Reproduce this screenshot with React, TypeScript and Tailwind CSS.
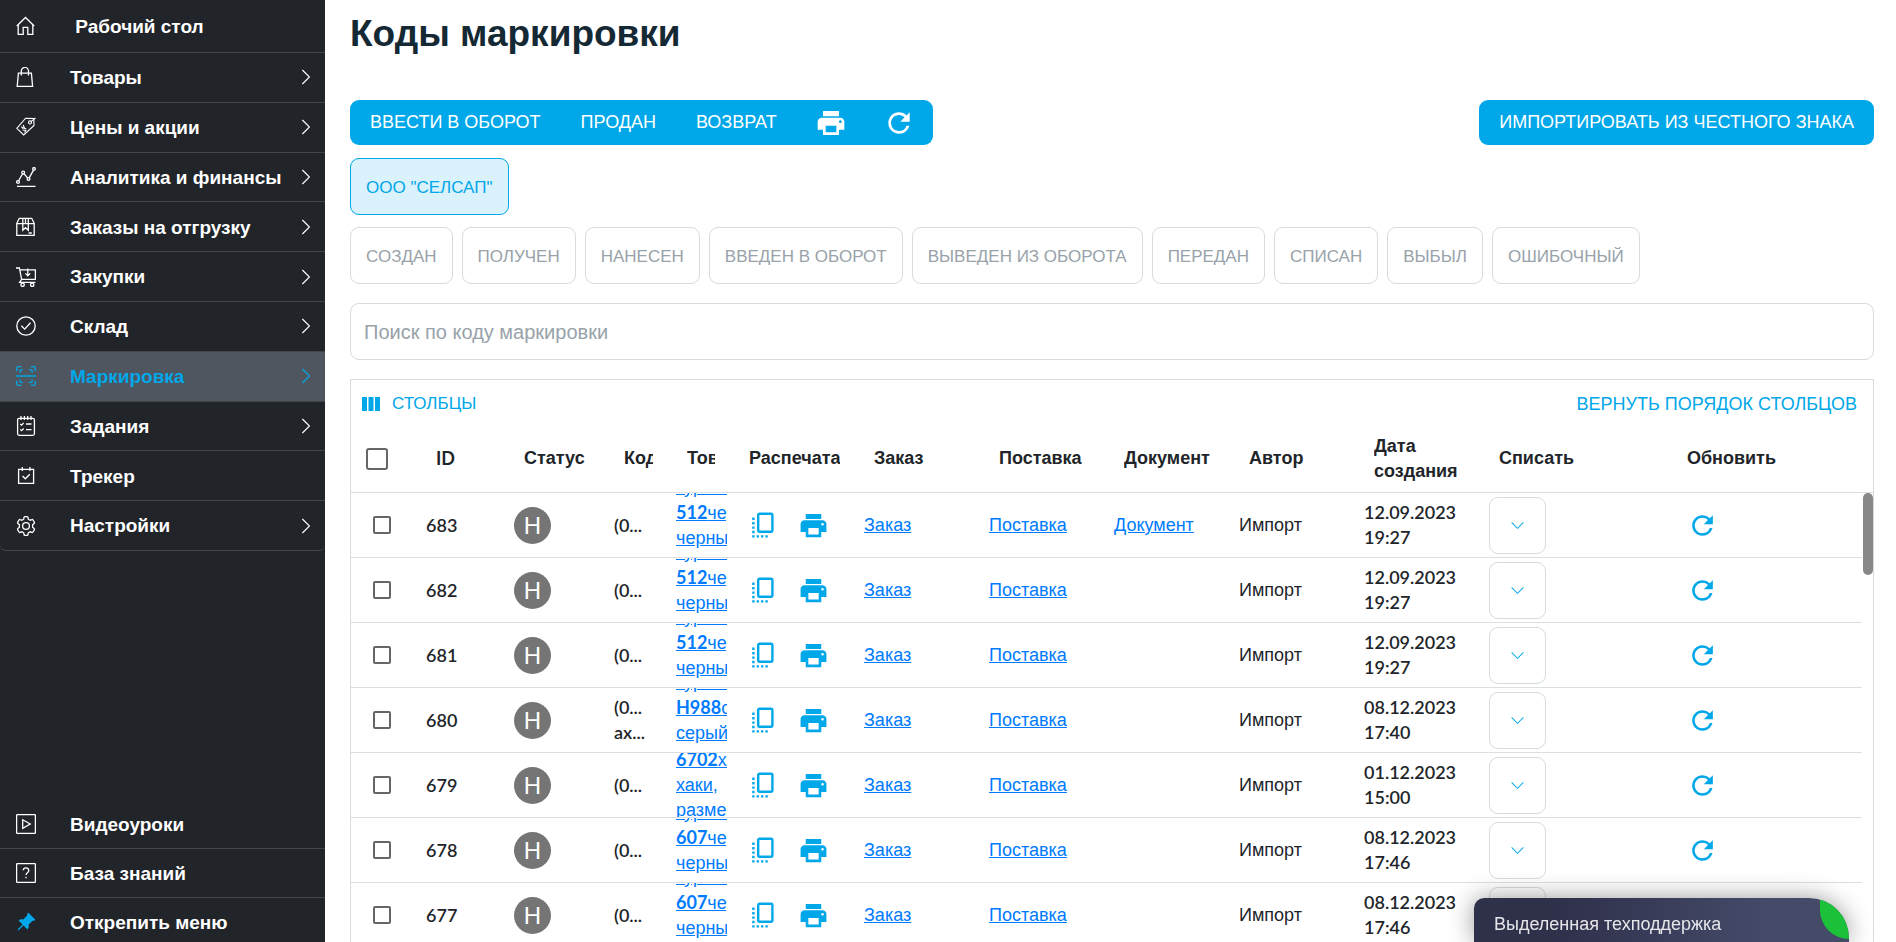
import React from "react";
import { BsChevronDown, BsChevronRight, BsPinAngleFill } from "react-icons/bs";
import { MdPrint, MdRefresh } from "react-icons/md";

const stroke = {
  width: 20,
  height: 20,
  viewBox: "0 0 20 20",
  fill: "none",
  stroke: "currentColor",
  strokeWidth: 1.3,
  "aria-hidden": true,
} as const;

const HomeIcon = () => (
  <svg {...stroke}>
    <path d="M.8 10 9.5 1.5 18.2 10M2.2 9v9.4h5V11.3h4.6v7.1h5V9" />
  </svg>
);
const BagIcon = () => (
  <svg {...stroke}>
    <path d="M2.4 6.2h13l1.2 13.1H1.2zM5.3 8.4V4a3.6 3.6 0 0 1 7.2 0v4.4" />
  </svg>
);
const TagIcon = () => (
  <svg {...stroke} strokeWidth={1.1}>
    <path d="M.8 11.3 9.6 1.2l8.2.3.2 7-10.300 9.400z" />
    <circle cx="14" cy="5.4" r="1.5" />
    <path d="M15 4.600 19.600.8M5.400 9.600l1.400 1.600 2-1M7.300 7.900l1 3.400 2.100.8M6.600 13l3.100.4-1 2" />
  </svg>
);
const ChartIcon = () => (
  <svg {...stroke}>
    <path d="M1 19.3h18.5M2.6 13.8 6.6 6.7M8 6.8l3.8 4.3M13.3 10.6l4.2-7.5" />
    <circle cx="2" cy="15" r="1.4" />
    <circle cx="7.2" cy="5.6" r="1.4" />
    <circle cx="12.5" cy="12" r="1.4" />
    <circle cx="18" cy="1.9" r="1.3" />
  </svg>
);
const BoxIcon = () => (
  <svg {...stroke}>
    <path d="M.8 18.4V6.3L3.3 1.3h12.4l2.5 5v12.1zM.8 6.600h17.400M6.800 1.300v11.900l2.700-2.500 2.800 2.500V1.300M9.500 1.300v5.300M12.600 16h3.200" />
  </svg>
);
const CartIcon = () => (
  <svg {...stroke}>
    <path d="M0 1h3.400l2.200 11.300h13.800V2.800H4M5.600 12.300 3.600 15.400h15.800M11.800 1.500v6.800M9.400 6.400l2.400 2.400 2.400-2.400" />
    <circle cx="6.600" cy="17.800" r="1.700" />
    <circle cx="16.200" cy="17.800" r="1.700" />
  </svg>
);
const CheckCircleIcon = () => (
  <svg {...stroke}>
    <circle cx="10" cy="10" r="9.2" />
    <path d="m5.3 9.8 3.4 3.3 5.8-6.3" />
  </svg>
);
const ScanIcon = () => (
  <svg {...stroke}>
    <path d="M.7 5.2V2.2A1.5 1.5 0 0 1 2.2.7h3M14.8.7h3a1.5 1.5 0 0 1 1.5 1.5v3M.7 14.8v3a1.5 1.5 0 0 0 1.5 1.5h3M14.8 19.3h3a1.5 1.5 0 0 0 1.5-1.5v-3M0 10h20M4 7V4.6a.8.8 0 0 1 .8-.8H7M13 3.8h2.3a.8.8 0 0 1 .8.8V7M4 13.3v2.2a.8.8 0 0 0 .8.8H7M13 16.3h2.3a.8.8 0 0 0 .8-.8v-2.2" />
  </svg>
);
const TasksIcon = () => (
  <svg {...stroke}>
    <rect x="1.6" y="2.3" width="16.8" height="17" rx="1.5" />
    <path d="M5 0v4M8.4 0v4M11.7 0v4M15 0v4M10 8h5.5M10 13.6h5.5M4.3 7.9l1.3 1.2 2.1-2.2M4.3 13.5l1.3 1.2 2.1-2.2" />
  </svg>
);
const TrackerIcon = () => (
  <svg {...stroke}>
    <path d="M2.6 3.3h15v14h-15zM6.3 1v4M13.9 1v4M6.5 10l2.8 2.8 4.5-4.6" />
  </svg>
);
const GearIcon = () => (
  <svg {...stroke}>
    <circle cx="10" cy="10" r="3.4" />
    <path d="M8 1.5a1 1 0 0 1 .9-.8h2.2a1 1 0 0 1 .9.8l.3 1.7 1.8 1 1.7-.6a1 1 0 0 1 1.2.4l1.3 2.1a1 1 0 0 1-.2 1.3L16.6 8.7v2.6l1.5 1.3a1 1 0 0 1 .2 1.3L17 16a1 1 0 0 1-1.2.4l-1.7-.6-1.8 1-.3 1.7a1 1 0 0 1-.9.8H8.9a1 1 0 0 1-.9-.8l-.3-1.7-1.8-1-1.7.6A1 1 0 0 1 3 16l-1.3-2.1a1 1 0 0 1 .2-1.3l1.5-1.3V8.7L1.9 7.4a1 1 0 0 1-.2-1.3L3 4a1 1 0 0 1 1.2-.4l1.7.6 1.8-1z" />
  </svg>
);
const PlayIcon = () => (
  <svg {...stroke}>
    <rect x=".6" y=".6" width="18.8" height="18.8" rx="1" />
    <path d="M6.7 5.8v8.6L14.2 10z" />
  </svg>
);
const HelpIcon = () => (
  <svg {...stroke}>
    <rect x=".6" y=".6" width="18.8" height="18.8" rx="1" />
    <path d="M7.2 7.3a2.8 2.6 0 1 1 4.5 2.2c-1.2.9-1.7 1.3-1.7 2.6M10 13.8v1.5" />
  </svg>
);
const ColumnsIcon = () => (
  <svg width="18" height="14" viewBox="0 0 18 14" fill="currentColor" aria-hidden>
    <path d="M0 0h5v14H0zM6.5 0h5v14h-5zM13 0h5v14h-5z" />
  </svg>
);
const CopyIcon = () => (
  <svg width="22" height="26" viewBox="0 0 22 26" fill="none" stroke="#00a7e9" aria-hidden>
    <rect x="6.2" y="1.7" width="14.2" height="18" rx="1.4" strokeWidth="2.4" />
    <path d="M1.4 5.6v20" strokeWidth="2.4" strokeDasharray="2.4 2" />
    <path d="M4.6 24.4h11.400" strokeWidth="2.4" strokeDasharray="2.4 2" />
  </svg>
);

type NavItem = { label: string; icon: React.ReactNode; arrow?: boolean; active?: boolean };

const menu: NavItem[] = [
  { label: "Товары", icon: <BagIcon />, arrow: true },
  { label: "Цены и акции", icon: <TagIcon />, arrow: true },
  { label: "Аналитика и финансы", icon: <ChartIcon />, arrow: true },
  { label: "Заказы на отгрузку", icon: <BoxIcon />, arrow: true },
  { label: "Закупки", icon: <CartIcon />, arrow: true },
  { label: "Склад", icon: <CheckCircleIcon />, arrow: true },
  { label: "Маркировка", icon: <ScanIcon />, arrow: true, active: true },
  { label: "Задания", icon: <TasksIcon />, arrow: true },
  { label: "Трекер", icon: <TrackerIcon /> },
  { label: "Настройки", icon: <GearIcon />, arrow: true },
];

const statuses = [
  "Создан",
  "Получен",
  "Нанесен",
  "Введен в оборот",
  "Выведен из оборота",
  "Передан",
  "Списан",
  "Выбыл",
  "Ошибочный",
];

type Row = {
  id: string;
  code: string[];
  model: string;
  color: string;
  details: string[];
  doc?: boolean;
  date: string;
  time: string;
};

const rows: Row[] = [
  { id: "683", code: ["(0..."], model: "512", color: "черный", details: ["черный,", "размер"], doc: true, date: "12.09.2023", time: "19:27" },
  { id: "682", code: ["(0..."], model: "512", color: "черный", details: ["черный,", "размер"], date: "12.09.2023", time: "19:27" },
  { id: "681", code: ["(0..."], model: "512", color: "черный", details: ["черный,", "размер"], date: "12.09.2023", time: "19:27" },
  { id: "680", code: ["(0...", "ax..."], model: "H988", color: "серый", details: ["серый,", "размер"], date: "08.12.2023", time: "17:40" },
  { id: "679", code: ["(0..."], model: "6702", color: "хаки", details: ["хаки,", "размер", "M"], date: "01.12.2023", time: "15:00" },
  { id: "678", code: ["(0..."], model: "607", color: "черный", details: ["черный,", "размер"], date: "08.12.2023", time: "17:46" },
  { id: "677", code: ["(0..."], model: "607", color: "черный", details: ["черный,", "размер"], date: "08.12.2023", time: "17:46" },
];

const columnWidths = ["w-[65px]", "w-[88px]", "w-[100px]", "w-[63px]", "w-[62px]", "w-[125px]", "w-[125px]", "w-[125px]", "w-[125px]", "w-[125px]", "w-[125px]", "w-[188px]", "w-auto", "w-[11px]"];
const headings = ["Статус", "Код", "Товар", "Распечатать", "Заказ", "Поставка", "Документ", "Автор", "Дата создания", "Списать", "Обновить"];

function MenuLink({ item }: { item: NavItem }) {
  return (
    <a href="#" className={`flex h-full w-full items-center pl-4 pr-[10px] ${item.active ? "text-[#00a7e9]" : "text-white"}`}>
      <span className="flex w-[54px] shrink-0">{item.icon}</span>
      <span className="flex-1 pt-[2px] whitespace-nowrap">{item.label}</span>
      {item.arrow && <BsChevronRight className="size-[18px]" />}
    </a>
  );
}

function LinkText({ children }: { children: React.ReactNode }) {
  return (
    <a href="#" className="text-[#007bff] underline">
      {children}
    </a>
  );
}

function Cell({ children, className = "px-[10px]" }: { children?: React.ReactNode; className?: string }) {
  return (
    <td className="border-b border-[#dcdfe2] p-0">
      <div className={`flex h-16 items-center overflow-hidden ${className}`}>{children}</div>
    </td>
  );
}

export default function App() {
  return (
    <div className="flex h-screen overflow-hidden bg-white font-['Liberation_Sans',sans-serif] text-[18px] text-[#212529]">
      <aside className="flex w-[325px] shrink-0 flex-col bg-[#212429] text-[19px] font-bold">
        <div className="h-[53px] shrink-0 border-b border-[#414549]">
          <MenuLink item={{ label: "\u00a0Рабочий стол", icon: <HomeIcon /> }} />
        </div>
        <ul className="flex h-[498px] shrink-0 flex-col">
          {menu.map((item) => (
            <li key={item.label} className={`flex-1 border-b border-[#414549] last:rounded-b-md ${item.active ? "bg-[#4f565f]" : ""}`}>
              <MenuLink item={item} />
            </li>
          ))}
        </ul>
        <ul className="mt-auto flex shrink-0 flex-col">
          <li className="h-[49px] border-b border-[#414549]">
            <MenuLink item={{ label: "Видеоуроки", icon: <PlayIcon /> }} />
          </li>
          <li className="h-[49px] border-b border-[#414549]">
            <MenuLink item={{ label: "База знаний", icon: <HelpIcon /> }} />
          </li>
          <li className="h-11 pt-1">
            <MenuLink item={{ label: "Открепить меню", icon: <BsPinAngleFill className="size-5 text-[#00a7e9]" /> }} />
          </li>
        </ul>
      </aside>

      <main className="flex min-w-0 flex-1 flex-col pl-[25px] pr-[22px]">
        <h1 className="mt-3 text-[37px] leading-[44px] font-bold text-[#152935]">Коды маркировки</h1>

        <div className="mt-11 flex justify-between text-white uppercase">
          <div className="flex h-[45px] items-center overflow-hidden rounded-[9px] bg-[#00a7e9] whitespace-nowrap">
            <button className="px-5 uppercase">Ввести в оборот</button>
            <button className="px-5 uppercase">Продан</button>
            <button className="px-5 uppercase">Возврат</button>
            <button className="px-[18px]" aria-label="Печать">
              <MdPrint className="size-8" />
            </button>
            <button className="px-[18px]" aria-label="Обновить">
              <MdRefresh className="size-8" />
            </button>
          </div>
          <button className="h-[45px] rounded-[9px] bg-[#00a7e9] px-5 uppercase">Импортировать из Честного Знака</button>
        </div>

        <div className="mt-[13px] flex">
          <button className="h-[57px] rounded-[9px] border border-[#00a7e9] bg-[#d9f2fc] px-[15px] pt-[2px] text-[17px] text-[#00a7e9] uppercase">ООО "Селсап"</button>
        </div>
        <div className="mt-3 flex gap-[9px] whitespace-nowrap">
          {statuses.map((s) => (
            <button key={s} className="h-[57px] rounded-[9px] border border-[#d5dbdf] px-[15px] pt-[2px] text-[17px] text-[#98a2a9] uppercase">
              {s}
            </button>
          ))}
        </div>
        <input
          aria-label="Поиск по коду маркировки"
          placeholder="Поиск по коду маркировки"
          className="mt-[19px] h-[57px] w-full shrink-0 rounded-[9px] border border-[#d5dbdf] px-[13px] pt-[2px] text-[20px] outline-none placeholder:text-[#98a2a9]"
        />

        <section className="relative mt-[19px] min-h-0 flex-1 overflow-hidden border border-b-0 border-[#d5dbdf]">
          <div className="flex h-12 items-center justify-between pl-[11px] pr-4 text-[#00a7e9]">
            <button className="flex items-center gap-3 text-[17px] uppercase">
              <ColumnsIcon />
              Столбцы
            </button>
            <button className="text-[18px] uppercase">Вернуть порядок столбцов</button>
          </div>

          <table className="w-full table-fixed border-separate border-spacing-0 text-left leading-[25px]">
            <colgroup>
              {columnWidths.map((w, i) => (
                <col key={i} className={w} />
              ))}
            </colgroup>
            <thead>
              <tr className="h-[65px]">
                <th className="border-b border-[#dcdfe2] p-0 pb-[3px]">
                  <input type="checkbox" aria-label="Выбрать все" className="ml-[15px] block size-[22px] appearance-none rounded-[3px] border-2 border-[#666666]" />
                </th>
                <th className="border-b border-[#dcdfe2] p-0 px-5 pb-[3px] font-['Lato',sans-serif] font-bold">ID</th>
                {headings.map((h) => (
                  <th key={h} className="border-b border-[#dcdfe2] p-0 pr-[14px] pb-[3px] pl-5">
                    <div className={`overflow-hidden ${h === "Дата создания" ? "" : "whitespace-nowrap"}`}>{h}</div>
                  </th>
                ))}
                <th className="border-b border-[#dcdfe2] p-0" />
              </tr>
            </thead>
            <tbody>
              {rows.map((r) => (
                <tr key={r.id}>
                  <Cell className="pl-[22px]">
                    <input type="checkbox" aria-label={`Выбрать ${r.id}`} className="size-[18px] appearance-none rounded-xs border-2 border-[#666666]" />
                  </Cell>
                  <Cell className="px-[10px] font-['Lato',sans-serif] font-semibold">{r.id}</Cell>
                  <Cell>
                    <span className="flex size-[37px] items-center justify-center rounded-full bg-[#757575] text-[24px] text-white">Н</span>
                  </Cell>
                  <Cell className="px-[10px] font-['Lato',sans-serif] font-semibold">
                    <div>
                      {r.code.map((c) => (
                        <div key={c}>{c}</div>
                      ))}
                    </div>
                  </Cell>
                  <Cell className="pl-[9px]">
                    <a href="#" className="w-[51px] shrink-0 overflow-hidden whitespace-nowrap text-[#007bff] underline">
                      <span className="block">куртка</span>
                      <span className="block">
                        <span className="font-['Lato',sans-serif] font-bold">{r.model}</span>
                        {r.color}
                      </span>
                      {r.details.map((d) => (
                        <span key={d} className="block">
                          {d}
                        </span>
                      ))}
                    </a>
                  </Cell>
                  <Cell className="pl-[23px]">
                    <button aria-label="Копировать">
                      <CopyIcon />
                    </button>
                    <button aria-label="Печать" className="ml-6 text-[#00a7e9]">
                      <MdPrint className="size-[31px]" />
                    </button>
                  </Cell>
                  <Cell>
                    <LinkText>Заказ</LinkText>
                  </Cell>
                  <Cell>
                    <LinkText>Поставка</LinkText>
                  </Cell>
                  <Cell>{r.doc && <LinkText>Документ</LinkText>}</Cell>
                  <Cell>Импорт</Cell>
                  <Cell className="px-[10px] font-['Lato',sans-serif] font-semibold">
                    <div>
                      <div>{r.date}</div>
                      <div>{r.time}</div>
                    </div>
                  </Cell>
                  <Cell>
                    <button aria-label="Списать" className="flex size-[57px] items-center justify-center rounded-[9px] border border-[#d5dbdf] text-[#00a7e9]">
                      <BsChevronDown className="size-[15px]" />
                    </button>
                  </Cell>
                  <Cell className="pl-5 text-[#00a7e9]">
                    <button aria-label="Обновить">
                      <MdRefresh className="size-[31px]" />
                    </button>
                  </Cell>
                  <td />
                </tr>
              ))}
            </tbody>
          </table>
          <div className="absolute top-[113px] right-0 h-[82px] w-[10px] rounded-full bg-[#888888]" />
        </section>
      </main>

      <a
        href="#"
        className="fixed right-[47px] bottom-0 flex h-11 w-[375px] items-center overflow-hidden rounded-tl-[10px] rounded-tr-[40px] bg-linear-to-r from-[#2f304a] from-20% to-[#444b69] to-80% pt-2 pl-5 text-[18px] text-[#e6e6ea] shadow-[0_0_24px_rgba(0,0,0,0.4)]"
      >
        Выделенная техподдержка
        <span className="absolute top-0 right-0 h-[41px] w-[29px] rounded-tr-full rounded-bl-full bg-[#1cc13a]" />
      </a>
    </div>
  );
}
